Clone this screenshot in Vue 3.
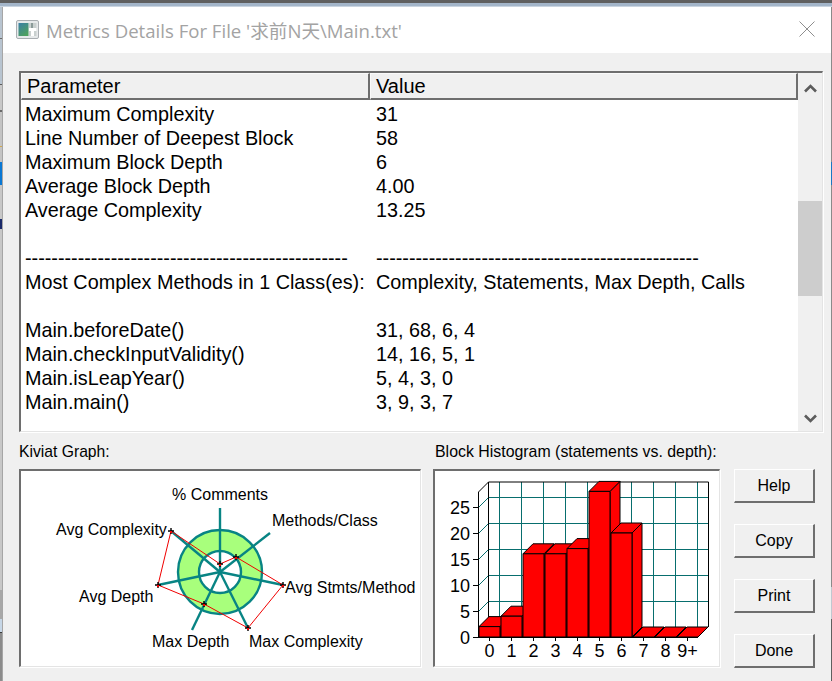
<script setup>
const dashes = '-'.repeat(49)
const rows = [
  ['Maximum Complexity', '31'],
  ['Line Number of Deepest Block', '58'],
  ['Maximum Block Depth', '6'],
  ['Average Block Depth', '4.00'],
  ['Average Complexity', '13.25'],
  ['', ''],
  [dashes, dashes],
  ['Most Complex Methods in 1 Class(es):', 'Complexity, Statements, Max Depth, Calls'],
  ['', ''],
  ['Main.beforeDate()', '31, 68, 6, 4'],
  ['Main.checkInputValidity()', '14, 16, 5, 1'],
  ['Main.isLeapYear()', '5, 4, 3, 0'],
  ['Main.main()', '3, 9, 3, 7'],
]
const buttons = ['Help', 'Copy', 'Print', 'Done']

/* Kiviat, coordinates relative to its box */
const kx = 21, ky = 471
const center = [220 - kx, 572 - ky]
const spokeEnds = [[220, 508], [270, 533], [283, 585], [248, 628], [192, 630], [158, 585], [171, 531]]
  .map(([x, y]) => [x - kx, y - ky])
const polyPts = [[220, 564], [236, 557], [283, 585], [248, 628], [204, 604], [158, 585], [171, 531]]
  .map(([x, y]) => [x - kx, y - ky])
const polyStr = polyPts.map((p) => p.join(',')).join(' ')
const kLabels = [
  { t: '% Comments', x: 151, y: 29 },
  { t: 'Methods/Class', x: 251, y: 55 },
  { t: 'Avg Stmts/Method', x: 264, y: 122 },
  { t: 'Max Complexity', x: 228, y: 176 },
  { t: 'Max Depth', x: 131, y: 176 },
  { t: 'Avg Depth', x: 58, y: 131 },
  { t: 'Avg Complexity', x: 35, y: 64 },
]

/* Histogram, coordinates relative to its box */
const hx = 435, hy = 471
const X = (v) => v - hx
const Y = (v) => v - hy
const floorY = 637, depth = 10, step = 22, unit = 5.2, x0 = 479, barW = 21
const bars = [2, 4, 16, 16, 17, 28, 20, 0, 0, 0].map((v, i) => {
  const l = X(x0 + i * step), r = l + barW, b = Y(floorY), t = b - v * unit
  return {
    v,
    front: `${l},${t} ${r},${t} ${r},${b} ${l},${b}`,
    top: `${l},${t} ${l + depth},${t - depth} ${r + depth},${t - depth} ${r},${t}`,
    side: `${r},${t} ${r + depth},${t - depth} ${r + depth},${b - depth} ${r},${b}`,
    flat: `${l},${b} ${l + depth},${b - depth} ${r + depth},${b - depth} ${r},${b}`,
  }
})
const vLines = Array.from({ length: 10 }, (_, i) => X(499.5 + i * step))
const hLevels = [5, 10, 15, 20, 25]
const xLabels = ['0', '1', '2', '3', '4', '5', '6', '7', '8', '9+']
const yLabels = [0, 5, 10, 15, 20, 25]
</script>

<template>
  <div class="screen">
    <div class="bezel-top"></div>
    <div class="middle">
      <div class="bezel-left"></div>
      <div class="window">
        <header class="titlebar">
          <svg class="app-icon" width="23" height="19" viewBox="0 0 23 19">
            <defs>
              <linearGradient id="ic" x1="0" y1="0" x2="0.6" y2="1">
                <stop offset="0" stop-color="#3a7fa6" />
                <stop offset="1" stop-color="#4da060" />
              </linearGradient>
            </defs>
            <rect x="0.5" y="0.5" width="22" height="18" rx="1.5" fill="#e6e9ea" stroke="#a9aeb2" />
            <rect x="2.5" y="3" width="10" height="13" fill="url(#ic)" />
            <rect x="13" y="3" width="7.5" height="13" fill="#c9d0cf" />
            <rect x="15" y="3" width="2" height="5" fill="#8a9a98" />
            <rect x="13" y="8" width="7.5" height="3" fill="#ffffff" />
            <rect x="15" y="11" width="3" height="5" fill="#ffffff" />
          </svg>
          <span class="title">Metrics Details For File '求前N天\Main.txt'</span>
          <svg class="close" width="16" height="16" viewBox="0 0 16 16">
            <path d="M0.5 0.5 L15.5 15.5 M15.5 0.5 L0.5 15.5" stroke="#8e8e8e" stroke-width="1" fill="none" />
          </svg>
        </header>

        <div class="body">
          <section class="listbox">
            <div class="listmain">
              <div class="listhead">
                <div class="hcell first">Parameter</div>
                <div class="hcell second">Value</div>
              </div>
              <div class="listrows">
                <div v-for="(r, i) in rows" :key="i" class="row">
                  <span class="c1">{{ r[0] }}</span>
                  <span class="c2">{{ r[1] }}</span>
                </div>
              </div>
            </div>
            <div class="scrollbar">
              <div class="sb-btn">
                <svg width="13" height="9" viewBox="0 0 13 9"><path d="M1 7.5 L6.5 2 L12 7.5" fill="none" stroke="#5c5c5c" stroke-width="2.6" /></svg>
              </div>
              <div class="sb-track"><div class="sb-thumb"></div></div>
              <div class="sb-btn end">
                <svg width="13" height="9" viewBox="0 0 13 9"><path d="M1 1.5 L6.5 7 L12 1.5" fill="none" stroke="#5c5c5c" stroke-width="2.6" /></svg>
              </div>
            </div>
          </section>

          <section class="bottom">
            <div class="panel kiviat">
              <div class="plabel">Kiviat Graph:</div>
              <div class="sunken">
                <svg width="400" height="196" viewBox="0 0 400 196">
                  <circle :cx="center[0]" :cy="center[1]" r="31.5" fill="none" stroke="#a8ff7c" stroke-width="21" />
                  <circle :cx="center[0]" :cy="center[1]" r="42" fill="none" stroke="#088484" stroke-width="2.4" />
                  <circle :cx="center[0]" :cy="center[1]" r="21" fill="none" stroke="#088484" stroke-width="2.4" />
                  <line v-for="(e, i) in spokeEnds" :key="i" :x1="center[0]" :y1="center[1]" :x2="e[0]" :y2="e[1]" stroke="#088484" stroke-width="2.4" />
                  <polygon :points="polyStr" fill="none" stroke="#f00000" stroke-width="1" />
                  <g v-for="(p, i) in polyPts" :key="'m' + i">
                    <path :d="`M${p[0] - 3} ${p[1]} H${p[0] + 3} M${p[0]} ${p[1] - 3} V${p[1] + 3}`" stroke="#000" stroke-width="1.4" />
                    <rect :x="p[0] - 1" :y="p[1] - 0" width="2" height="2" fill="#f00000" />
                  </g>
                  <text v-for="l in kLabels" :key="l.t" :x="l.x" :y="l.y" class="gtext">{{ l.t }}</text>
                </svg>
              </div>
            </div>

            <div class="panel hist">
              <div class="plabel">Block Histogram (statements vs. depth):</div>
              <div class="sunken">
                <svg width="285" height="196" viewBox="0 0 285 196">
                  <line v-for="v in vLines" :key="'v' + v" :x1="v" :y1="Y(482)" :x2="v" :y2="Y(627)" stroke="#086e6e" stroke-width="1" />
                  <g v-for="h in hLevels" :key="'h' + h">
                    <line :x1="X(488.5)" :y1="Y(627.5 - h * unit)" :x2="X(708)" :y2="Y(627.5 - h * unit)" stroke="#086e6e" stroke-width="1" />
                    <line :x1="X(478.5)" :y1="Y(637.5 - h * unit)" :x2="X(488.5)" :y2="Y(627.5 - h * unit)" stroke="#086e6e" stroke-width="1" />
                    <line :x1="X(473)" :y1="Y(637.5 - h * unit)" :x2="X(478.5)" :y2="Y(637.5 - h * unit)" stroke="#000" stroke-width="1" />
                  </g>
                  <polyline :points="`${X(478.5)},${Y(637)} ${X(478.5)},${Y(492)} ${X(488.5)},${Y(482)} ${X(708.5)},${Y(482)} ${X(708.5)},${Y(627)}`" fill="none" stroke="#000" stroke-width="1" />
                  <line :x1="X(488.5)" :y1="Y(482)" :x2="X(488.5)" :y2="Y(627)" stroke="#000" stroke-width="1" />
                  <line :x1="X(473)" :y1="Y(637.5)" :x2="X(698)" :y2="Y(637.5)" stroke="#000" stroke-width="1" />
                  <g v-for="(b, i) in bars" :key="'b' + i">
                    <polygon v-if="b.v === 0" :points="b.flat" fill="#ff0000" stroke="#000" stroke-width="1" />
                    <template v-else>
                      <polygon :points="b.side" fill="#ff0000" stroke="#000" stroke-width="1" />
                      <polygon :points="b.top" fill="#ff0000" stroke="#000" stroke-width="1" />
                      <polygon :points="b.front" fill="#ff0000" stroke="#000" stroke-width="1" />
                    </template>
                  </g>
                  <line v-for="(l, i) in xLabels" :key="'t' + i" :x1="X(489.5 + i * step)" :y1="Y(637)" :x2="X(489.5 + i * step)" :y2="Y(641)" stroke="#000" stroke-width="1" />
                  <text v-for="(l, i) in xLabels" :key="'xl' + i" :x="X(489.5 + i * step)" :y="Y(657)" text-anchor="middle" class="atext">{{ l }}</text>
                  <text v-for="v in yLabels" :key="'yl' + v" :x="X(470)" :y="Y(644 - v * unit)" text-anchor="end" class="atext">{{ v }}</text>
                </svg>
              </div>
            </div>

            <div class="actions">
              <button v-for="b in buttons" :key="b" class="btn" type="button">{{ b }}</button>
            </div>
          </section>
        </div>
      </div>
      <div class="bezel-right"></div>
    </div>
  </div>
</template>

<style>
html, body { margin: 0; padding: 0; }
</style>

<style scoped>
.screen {
  width: 832px;
  height: 681px;
  overflow: hidden;
  display: flex;
  flex-direction: column;
  font-family: "Liberation Sans", Arial, sans-serif;
  color: #000;
}
.bezel-top {
  height: 7px;
  flex: none;
  box-sizing: border-box;
  background: #a3b5c9;
  border-top: 3px solid #5f5f5f;
  border-bottom: 1px solid #c9d4e0;
}
.middle { flex: 1; display: flex; min-height: 0; }
.bezel-left {
  width: 3px;
  flex: none;
  box-sizing: border-box;
  border-right: 1px solid #a6a6a6;
  background: linear-gradient(180deg,
    #b8c4d0 0 31px, #6a6a6a 31px 32px, #b8c4d0 32px 77px, #5c5c5c 77px 78px,
    #c8c8c8 78px 103px, #6a6a6a 103px 105px, #c4c4c4 105px 139px,
    #d0a850 139px 140px, #c4c4c4 140px 155px, #0a78d4 155px 178px,
    #c8c8c8 178px 212px, #1a2a6a 212px 222px, #c8c8c8 222px 583px,
    #a8a8a8 583px 612px, #c6d6e6 612px 625px, #3c3c3c 625px 626px, #8c8c8c 626px);
}
.bezel-right {
  width: 1px;
  flex: none;
  background: linear-gradient(180deg,
    #8a8a8a 0 155px, #1a78c4 155px 178px, #8a8a8a 178px 580px, #c0c8d0 580px 612px, #5f5f5f 612px);
}
.window { flex: 1; display: flex; flex-direction: column; background: #f0f0f0; min-width: 0; }
.titlebar {
  height: 46px;
  flex: none;
  background: #fff;
  display: flex;
  align-items: center;
  padding: 0 17px 0 13px;
}
.app-icon { flex: none; margin-top: -2px; }
.title {
  margin: -2px 0 0 7px;
  font-family: "Open Sans", "Noto Sans CJK SC", sans-serif;
  font-size: 18.6px;
  color: #a3a3a3;
  white-space: nowrap;
  flex: 1;
}
.close { flex: none; margin-top: -3px; margin-right: -1px; }
.body { flex: 1; padding: 18px 8px 0 16px; display: flex; flex-direction: column; min-height: 0; }
.listbox {
  height: 361px;
  flex: none;
  box-sizing: border-box;
  display: flex;
  background: #fff;
  border-top: 2px solid #6e6e6e;
  border-left: 2px solid #6e6e6e;
  border-right: 1px solid #e4e4e4;
  border-bottom: 1px solid #e4e4e4;
  box-shadow: 1px 1px 0 #fff;
}
.listmain { width: 777px; flex: none; display: flex; flex-direction: column; }
.listhead { display: flex; height: 27px; flex: none; background: #f0f0f0; }
.hcell {
  box-sizing: border-box;
  height: 27px;
  background: #f0f0f0;
  border-top: 1px solid #fafafa;
  border-left: 1px solid #fafafa;
  border-right: 2px solid #6e6e6e;
  border-bottom: 2px solid #6e6e6e;
  font-size: 20px;
  line-height: 24px;
  white-space: nowrap;
}
.hcell.first { width: 349px; padding-left: 5px; }
.hcell.second { flex: 1; padding-left: 5px; }
.listrows { padding-top: 2px; }
.row {
  display: flex;
  height: 24px;
  line-height: 24px;
  font-size: 19.8px;
  white-space: nowrap;
}
.c1 { width: 351px; flex: none; padding-left: 4px; box-sizing: border-box; }
.c2 { padding-left: 4px; }
.scrollbar { flex: 1; display: flex; flex-direction: column; background: #f0f0f0; min-width: 0; }
.sb-btn { height: 28px; flex: none; display: flex; align-items: center; justify-content: center; padding-top: 2px; box-sizing: border-box; }
.sb-track { flex: 1; padding-top: 100px; }
.sb-thumb { height: 95px; background: #cdcdcd; }
.bottom { display: flex; margin-top: 8px; }
.panel { display: flex; flex-direction: column; }
.kiviat { width: 414px; flex: none; }
.hist { width: 299px; flex: none; }
.plabel {
  font-size: 15.7px;
  line-height: 20px;
  height: 29px;
  padding-top: 2px;
  box-sizing: border-box;
  white-space: nowrap;
}
.hist .plabel { font-size: 15.9px; padding-left: 2px; }
.sunken {
  box-sizing: border-box;
  background: #fff;
  height: 198px;
  border-top: 2px solid #6e6e6e;
  border-left: 2px solid #6e6e6e;
  border-right: 1px solid #e4e4e4;
  border-bottom: 1px solid #e4e4e4;
  box-shadow: 1px 1px 0 #fff;
  overflow: hidden;
}
.sunken svg { display: block; }
.kiviat .sunken { width: 402px; }
.hist .sunken { width: 287px; }
.gtext { font-family: "Liberation Sans", Arial, sans-serif; font-size: 16px; fill: #000; }
.atext { font-family: "Liberation Sans", Arial, sans-serif; font-size: 18px; fill: #000; }
.actions {
  width: 83px;
  flex: none;
  display: flex;
  flex-direction: column;
  gap: 21px;
  padding: 29px 0 0 2px;
  box-sizing: border-box;
}
.btn {
  box-sizing: border-box;
  width: 81px;
  height: 34px;
  padding: 0;
  background: #f0f0f0;
  border-top: 1px solid #fff;
  border-left: 1px solid #fff;
  border-right: 2px solid #6e6e6e;
  border-bottom: 2px solid #6e6e6e;
  font-family: "Liberation Sans", Arial, sans-serif;
  font-size: 16px;
  color: #000;
}
</style>
